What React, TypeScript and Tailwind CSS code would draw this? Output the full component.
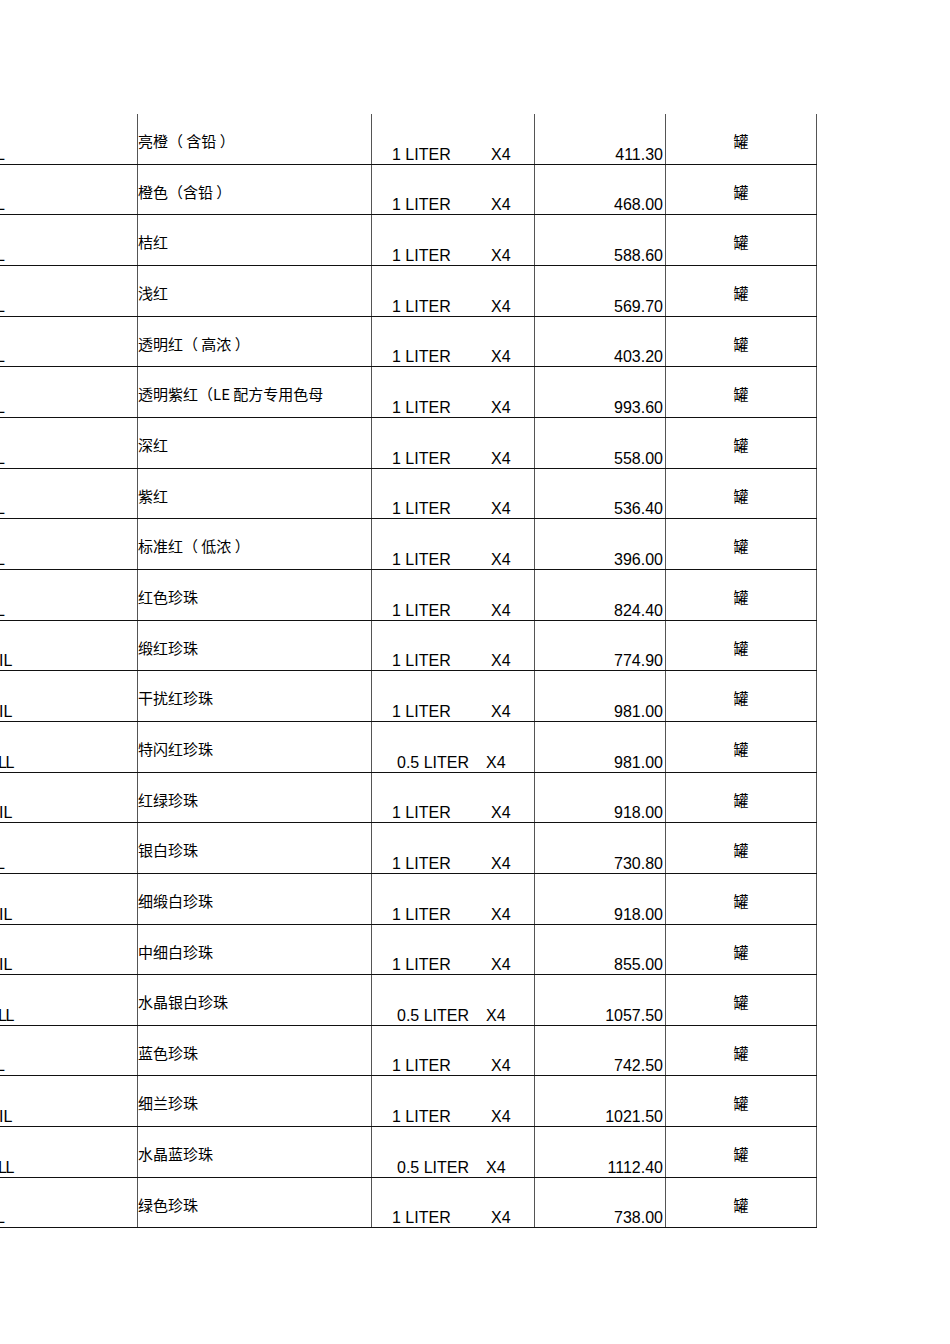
const ROWS = [
  { code: '_', name: '亮橙（ 含铅 ）', pack: '1', price: '411.30' },
  { code: '_', name: '橙色（含铅 ）', pack: '1', price: '468.00' },
  { code: '_', name: '桔红', pack: '1', price: '588.60' },
  { code: '_', name: '浅红', pack: '1', price: '569.70' },
  { code: '_', name: '透明红（ 高浓 ）', pack: '1', price: '403.20' },
  { code: '_', name: '透明紫红（LE 配方专用色母', pack: '1', price: '993.60' },
  { code: '_', name: '深红', pack: '1', price: '558.00' },
  { code: '_', name: '紫红', pack: '1', price: '536.40' },
  { code: '_', name: '标准红（ 低浓 ）', pack: '1', price: '396.00' },
  { code: '_', name: '红色珍珠', pack: '1', price: '824.40' },
  { code: 'IL', name: '缎红珍珠', pack: '1', price: '774.90' },
  { code: 'IL', name: '干扰红珍珠', pack: '1', price: '981.00' },
  { code: 'LL', name: '特闪红珍珠', pack: '0.5', price: '981.00' },
  { code: 'IL', name: '红绿珍珠', pack: '1', price: '918.00' },
  { code: '_', name: '银白珍珠', pack: '1', price: '730.80' },
  { code: 'IL', name: '细缎白珍珠', pack: '1', price: '918.00' },
  { code: 'IL', name: '中细白珍珠', pack: '1', price: '855.00' },
  { code: 'LL', name: '水晶银白珍珠', pack: '0.5', price: '1057.50' },
  { code: '_', name: '蓝色珍珠', pack: '1', price: '742.50' },
  { code: 'IL', name: '细兰珍珠', pack: '1', price: '1021.50' },
  { code: 'LL', name: '水晶蓝珍珠', pack: '0.5', price: '1112.40' },
  { code: '_', name: '绿色珍珠', pack: '1', price: '738.00' },
]

const latin = { fontFamily: '"Liberation Sans", Arial, sans-serif' }
const cjk = { fontFamily: '"Noto Sans CJK SC", "Noto Sans", sans-serif' }
const cjkJp = { fontFamily: '"Noto Sans CJK JP", "Noto Sans CJK SC", sans-serif' }

function Code({ code }: { code: string }) {
  if (code === '_') return <span className="ml-[-4px]">L</span>
  if (code === 'IL') return <span className="ml-[-1px]">IL</span>
  return <span className="ml-[-2px] tracking-[-1.5px]">LL</span>
}

export default function App() {
  return (
    <div className="min-h-[1344px] w-[950px] bg-white pt-[114px] text-black">
      <div className="w-[817px]">
        {ROWS.map((r, i) => (
          <div key={i} className="flex h-[50.67px] border-b border-[#111]">
            <div className="flex w-[138px] items-end overflow-hidden border-r border-[#555] pb-[1px] text-[16px] leading-[16px]" style={latin}>
              <Code code={r.code} />
            </div>
            <div className="w-[234px] whitespace-nowrap border-r border-[#555] pt-[17px] text-[15px] leading-[20px] text-black" style={cjk}>
              {r.name}
            </div>
            <div className="flex w-[163px] items-end border-r border-[#555] pb-[1px] text-[16px] leading-[16px]" style={latin}>
              {r.pack === '1' ? (
                <>
                  <span className="ml-[20px] w-[99px]">1 LITER</span>
                  <span>X4</span>
                </>
              ) : (
                <>
                  <span className="ml-[25px] w-[89px]">0.5 LITER</span>
                  <span>X4</span>
                </>
              )}
            </div>
            <div className="flex w-[131px] items-end justify-end border-r border-[#555] pb-[1px] pr-[2px] text-[16px] leading-[16px]" style={latin}>
              {r.price}
            </div>
            <div className="w-[151px] border-r border-[#555] pt-[17px] text-center text-[15px] leading-[20px] text-black" style={cjkJp}>
              罐
            </div>
          </div>
        ))}
      </div>
    </div>
  )
}
